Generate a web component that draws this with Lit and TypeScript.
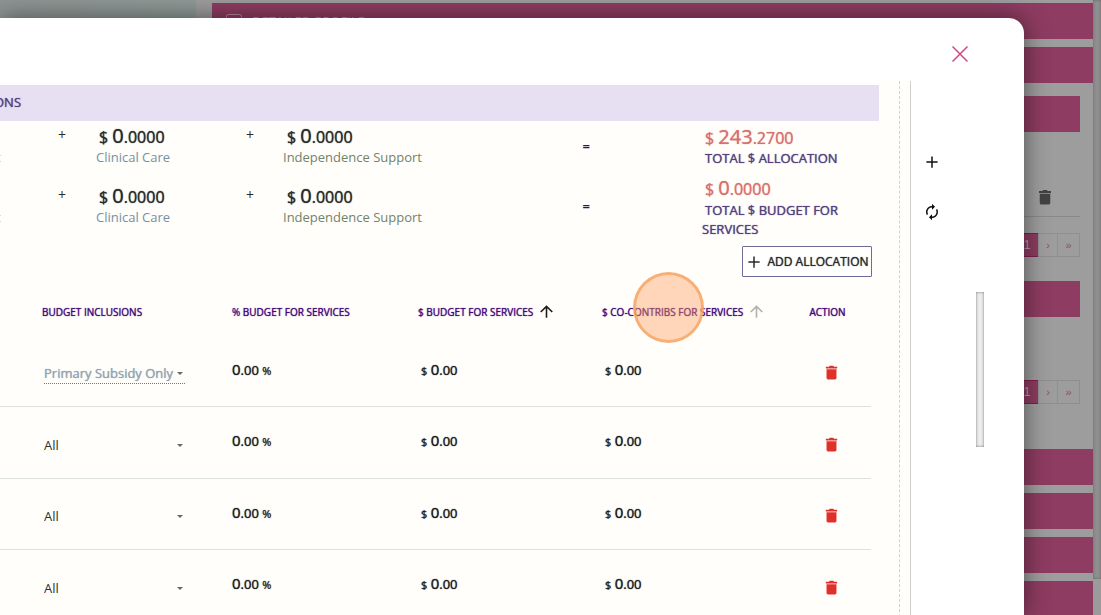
import { LitElement, html, css, svg } from "lit";
import { customElement } from "lit/decorators.js";
import { classMap } from "lit/directives/class-map.js";

const icon = (path: unknown, size: number, cls = "") => html`
  <svg class=${cls} width=${size} height=${size} viewBox="0 0 24 24" fill="currentColor" aria-hidden="true">${path}</svg>
`;
const trash = svg`<path d="M5 19.500c0 1.300.9 2.500 2.200 2.500h9.600c1.300 0 2.200-1.200 2.200-2.500V7.500H5v12zM20 4h-4.500l-1-1.500h-5L8.500 4H4v2.500h16V4z"/>`;
const arrowUp = svg`<path d="M4 12l1.410 1.410L11 7.830V20h2V7.830l5.580 5.590L20 12l-8-8-8 8z"/>`;
const plus = svg`<path d="M19.500 13h-6.500v6.500h-2v-6.500H4.500v-2h6.500V4.500h2v6.500h6.500v2z"/>`;
const refresh = svg`<path d="M12 6v3l4-4-4-4v3c-4.420 0-8 3.580-8 8 0 1.570.460 3.030 1.240 4.260L6.700 14.800A5.870 5.870 0 0 1 6 12c0-3.310 2.690-6 6-6zm6.760 1.740L17.300 9.200c.440.840.700 1.790.700 2.800 0 3.310-2.690 6-6 6v-3l-4 4 4 4v-3c4.420 0 8-3.580 8-8 0-1.570-.460-3.030-1.240-4.260z"/>`;

const strong = css`
  .strong { font-weight: 400; text-shadow: 0 0 1px currentColor; }
`;

const amount = (whole: string, decimals: string) => html`
  <span class="amount strong"><small>$</small> <b>${whole}</b>.${decimals}</span>
`;

@customElement("profile-page")
class ProfilePage extends LitElement {
  static styles = css`
    :host { display: flex; min-height: 100vh; background: #9d9d9d; font: 13px/18px "Open Sans", sans-serif; }
    .photo { flex: 0 0 196px; background: linear-gradient(90deg, #8d9594, #8e9996); }
    main { flex: 1; display: flex; flex-direction: column; gap: 8px; padding: 3px 0 0 16px; }
    .bar { height: 36px; flex: none; background: #8e3c61; color: #b98aa0; display: flex; align-items: center; gap: 10px; padding: 0 14px; }
    .bar svg { flex: none; }
    .body { padding: 5px 13px 37px 0; display: flex; flex-direction: column; }
    .tools { height: 84px; border-bottom: 1px solid #898989; display: flex; align-items: flex-end; justify-content: flex-end; padding: 0 26px 0 0; margin-bottom: 16px; box-sizing: border-box; color: #424242; margin-top: 1px; }
    .tools svg { margin-bottom: 10px; }
    .pager { display: flex; justify-content: flex-end; margin-bottom: 24px; }
    .pager button { font: 11px/22px "Liberation Sans", sans-serif; border: 1px solid #8f8f8f; background: none; color: #8e4c6b; height: 24px; padding: 0; width: 20px; margin-left: -1px; }
    .pager button:last-child { width: 23px; }
    .pager .on { background: #8e3c61; border-color: #7d1f4b; color: #b5a0aa; width: 24px; font-size: 12px; }
    .space { height: 63px; }
    .pager.end { margin-bottom: 0; }
    .track { flex: 0 0 8px; display: flex; flex-direction: column; background: #9b9b9b; }
    .thumb { height: 579px; background: #8f8f8f; box-shadow: inset 0 0 3px #666; }
  `;
  pager(end = false) {
    return html`<nav class=${classMap({ pager: true, end })}>
      <button class="on">1</button><button>›</button><button>»</button>
    </nav>`;
  }
  render() {
    return html`
      <div class="photo"></div>
      <main>
        <div class="bar">
          <svg width="16" height="14" viewBox="0 0 16 14" fill="none" stroke="currentColor"><rect x=".5" y=".5" width="15" height="13" rx="2" /></svg>
          DETAILED PROFILE
        </div>
        <div class="bar"></div>
        <div class="body">
          <div class="bar"></div>
          <div class="tools">${icon(trash, 18)}</div>
          ${this.pager()}
          <div class="bar"></div>
          <div class="space"></div>
          ${this.pager(true)}
        </div>
        <div class="bar"></div>
        <div class="bar"></div>
        <div class="bar"></div>
        <div class="bar"></div>
      </main>
      <div class="track"><div class="thumb"></div></div>
    `;
  }
}

@customElement("allocation-summary")
class AllocationSummary extends LitElement {
  static styles = [strong, css`
    :host { display: flex; color: #2b2b2b; font: 13px/20px "Open Sans", sans-serif; }
    .parts { flex: 1; display: grid; grid-template-columns: 58px 188px 187px 1fr; grid-auto-rows: 60px; }
    .edge { overflow: hidden; color: #7fa3b8; padding-top: 26px; }
    .edge span { margin-left: -4px; }
    .part { display: grid; grid-template-columns: 38px 1fr; grid-template-rows: 26px 20px; align-content: start; }
    .sign { grid-row: span 2; font-size: 14px; line-height: 28px; }
    .value { padding: 5px 0 0 3px; }
    .clinical { color: #7590a5; }
    .support { color: #71836a; margin-left: -1px; }
    .amount { font-size: 16px; line-height: 20px; }
    .amount b { font-size: 20px; font-weight: 400; }
    .amount small { font-size: 16px; }
    .equals { color: #3b0a6b; font-weight: 700; line-height: 50px; text-align: right; padding-right: 112px; }
    .totals { width: 170px; padding-right: 7px; color: #54407f; }
    .totals p { margin: 0; line-height: 19px; text-indent: 3px; }
    .totals .amount { color: #d9706f; display: block; padding: 5px 0 0 3px; line-height: 21px; }
    .totals p + .amount { padding-top: 9px; }
    .totals p:last-child { padding-top: 1px; }
  `];
  render() {
    const part = (label: string, kind: string) => html`
      <div class="part">
        <span class="sign">+</span>
        <span class="value">${amount("0", "0000")}</span>
        <span class=${kind}>${label}</span>
      </div>`;
    const row = html`
      <div class="edge"><span>t</span></div>
      ${part("Clinical Care", "clinical")} ${part("Independence Support", "support")}
      <div class="equals">=</div>`;
    return html`
      <div class="parts">${row}${row}</div>
      <div class="totals">
        ${amount("243", "2700")}
        <p class="strong">TOTAL $ ALLOCATION</p>
        ${amount("0", "0000")}
        <p class="strong">TOTAL $ BUDGET FOR SERVICES</p>
      </div>
    `;
  }
}

@customElement("allocation-table")
class AllocationTable extends LitElement {
  static styles = [strong, css`
    :host { display: block; font: 12px/20px "Open Sans", sans-serif; color: #1d1d1d; }
    table { width: 100%; table-layout: fixed; border-collapse: separate; border-spacing: 0; }
    .c1 { width: 232px; } .c2 { width: 186px; } .c3 { width: 184px; } .c4 { width: 182px; } .c5 { width: 87px; }
    th { height: 45px; padding: 0 0 2px; text-align: left; font-size: 10px; color: #45087a; white-space: nowrap; vertical-align: middle; }
    th:first-child { padding-left: 42px; }
    th:last-child { text-align: center; }
    .head { display: flex; align-items: center; gap: 4px; }
    .head button { border: 0; padding: 0; background: none; display: flex; color: #1d1d1d; }
    .head button.idle { color: #b0b0b0; }
    td { height: 71px; box-sizing: border-box; padding: 0 0 0 3px; border-bottom: 1px solid #dfe3e0; vertical-align: middle; }
    tr:nth-child(even) td { height: 72px; }
    td:first-child { padding-left: 44px; }
    td:nth-child(2) { padding-left: 0; }
    td:last-child { text-align: center; padding: 0 0 0 7px; }
    .pick { display: grid; width: 141px; align-items: center; margin-top: 5px; }
    .pick select, .pick svg { grid-area: 1 / 1; }
    .pick svg { justify-self: end; margin-right: 2px; pointer-events: none; color: #666; }
    select { appearance: none; border: 0; background: none; padding: 0; margin: 0; font: 13px/20px "Open Sans", sans-serif; color: #2f2f2f; height: 21px; width: 100%; border-bottom: 1px solid transparent; }
    .dotted select { border-bottom: 1px dotted #777; color: #93a3b1; }
    .amount { display: block; font-size: 13px; margin-bottom: 3px; }
    .amount b { font-size: 15px; font-weight: 400; }
    .amount small { font-size: 11px; }
    .del { border: 0; background: none; padding: 0; color: #e0302c; display: inline-flex; vertical-align: middle; margin-top: 3px; }
  `];
  rows = ["Primary Subsidy Only", "All", "All", "All"];
  render() {
    return html`
      <table>
        <colgroup><col class="c1" /><col class="c2" /><col class="c3" /><col class="c4" /><col class="c5" /></colgroup>
        <thead>
          <tr>
            <th class="strong">BUDGET INCLUSIONS</th>
            <th class="strong">% BUDGET FOR SERVICES</th>
            <th class="strong"><div class="head">$ BUDGET FOR SERVICES <button aria-label="Sort by budget">${icon(arrowUp, 19)}</button></div></th>
            <th class="strong"><div class="head">$ CO-CONTRIBS FOR SERVICES <button class="idle" aria-label="Sort by contributions">${icon(arrowUp, 19)}</button></div></th>
            <th class="strong">ACTION</th>
          </tr>
        </thead>
        <tbody>
          ${this.rows.map(
            (value) => html`
              <tr>
                <td>
                  <div class=${classMap({ pick: true, dotted: value !== "All" })}>
                    <select class=${classMap({ strong: value !== "All" })} aria-label="Budget inclusions"><option>${value}</option></select>
                    <svg width="6" height="3" viewBox="0 0 6 3" fill="currentColor" aria-hidden="true"><path d="M0 0h6L3 3z" /></svg>
                  </div>
                </td>
                <td><span class="amount strong"><b>0</b>.00 <small>%</small></span></td>
                <td>${amount("0", "00")}</td>
                <td>${amount("0", "00")}</td>
                <td><button class="del" aria-label="Delete">${icon(trash, 17)}</button></td>
              </tr>`
          )}
        </tbody>
      </table>
    `;
  }
}

@customElement("app-root")
class AppRoot extends LitElement {
  static styles = [strong, css`
    :host { display: block; position: relative; height: 100vh; overflow: hidden; font: 13px/20px "Open Sans", sans-serif; }
    .modal { position: absolute; inset: 18px 77px 0 0; background: #fff; border-radius: 0 15px 0 0; box-shadow: 0 0 24px rgba(0, 0, 0, 0.5); display: flex; flex-direction: column; overflow: hidden; }
    header { flex: 0 0 63px; display: flex; justify-content: flex-end; align-items: center; padding: 8px 55px 0 0; box-sizing: border-box; }
    button { border: 0; background: none; padding: 0; color: #111; display: flex; align-items: center; justify-content: center; font: inherit; }
    .close { width: 18px; height: 18px; color: #cc4888; }
    .content { flex: 1; display: flex; min-height: 0; }
    .panel { flex: 1; background: #fffefa; border-right: 1px solid #cfcfcf; padding-right: 10px; min-width: 0; overflow: hidden; }
    .sheet { border-right: 1px dashed #cdd3cd; padding: 4px 20px 0 0; min-height: 100%; box-sizing: border-box; }
    h2 { margin: 0; background: #e7e0f3; height: 36px; font-size: 13px; line-height: 35px; color: #54407f; text-indent: -6px; overflow: hidden; }
    allocation-summary { height: 125px; }
    .actions { display: flex; justify-content: flex-end; padding-right: 7px; }
    .add { border: 1px solid #6f6b98; border-radius: 1px; background: #fff; height: 31px; width: 130px; font-size: 12px; gap: 4px; color: #2a2a2a; }
    allocation-table { margin: 12px 8px 0 0; }
    .rail { flex: 0 0 113px; display: flex; justify-content: space-between; padding-right: 40px; box-sizing: border-box; }
    .tools { display: flex; flex-direction: column; gap: 32px; padding: 72px 0 0 12px; }
    .scroll { width: 8px; height: 155px; margin-top: 211px; background: #ededed; box-shadow: inset 0 0 3px #777; }
    .marker { position: absolute; left: 633px; top: 272px; width: 71px; height: 71px; box-sizing: border-box; border-radius: 50%; border: 3px solid rgba(245, 165, 100, 0.8); background: rgba(255, 160, 95, 0.42); pointer-events: none; }
  `];
  render() {
    return html`
      <profile-page></profile-page>
      <section class="modal" role="dialog" aria-label="Allocations">
        <header>
          <button class="close" aria-label="Close">
            <svg width="16" height="16" viewBox="0 0 16 16" fill="none" stroke="currentColor" stroke-width="1.500"><path d="M.5.5l15 15M15.500.5l-15 15" /></svg>
          </button>
        </header>
        <div class="content">
          <div class="panel">
            <div class="sheet">
              <h2 class="strong">ONS</h2>
              <allocation-summary></allocation-summary>
              <div class="actions"><button class="add strong">${icon(plus, 18)} ADD ALLOCATION</button></div>
              <allocation-table></allocation-table>
            </div>
          </div>
          <aside class="rail">
            <div class="tools">
              <button aria-label="Add">${icon(plus, 18)}</button>
              <button aria-label="Refresh">${icon(refresh, 18)}</button>
            </div>
            <div class="scroll"></div>
          </aside>
        </div>
      </section>
      <div class="marker"></div>
    `;
  }
}
